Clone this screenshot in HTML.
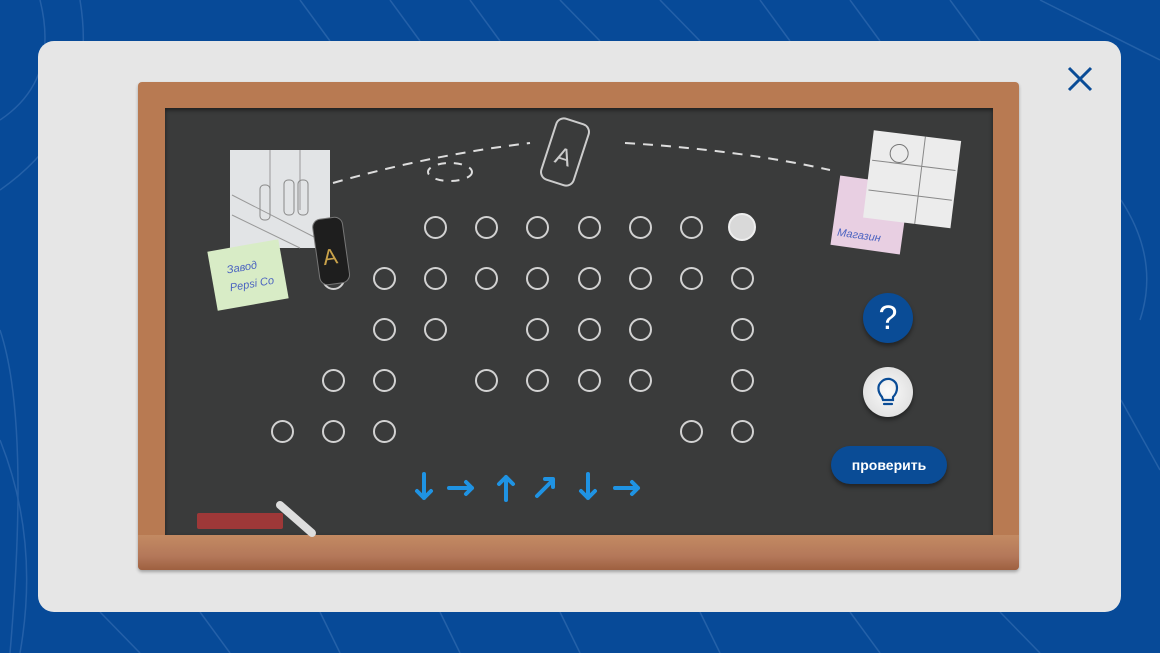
<!DOCTYPE html>
<html><head><meta charset="utf-8"><style>
*{margin:0;padding:0;box-sizing:border-box}
body{width:1160px;height:653px;overflow:hidden;background:#074a98;font-family:"Liberation Sans",sans-serif;position:relative}
.panel{position:absolute;left:38px;top:41px;width:1083px;height:571px;background:#e6e6e6;border-radius:16px}
.frame{position:absolute;left:138px;top:82px;width:881px;height:488px;background:#b87a52;border-radius:4px;box-shadow:0 2px 3px rgba(0,0,0,.3)}
.board{position:absolute;left:165px;top:108px;width:828px;height:427px;background:#3a3b3b;box-shadow:inset 0 2px 4px rgba(0,0,0,.5)}
.ledge{position:absolute;left:138px;top:535px;width:881px;height:35px;background:linear-gradient(#c38a62,#b4785a 60%,#9e6040);border-radius:0 0 4px 4px}
.c{position:absolute;width:23px;height:23px;border:2px solid #d2d2d2;border-radius:50%}
.btn{position:absolute;border-radius:50%;width:50px;height:50px;box-shadow:0 3px 4px rgba(0,0,0,.4)}
#top{position:absolute;left:0;top:0;z-index:2}
</style></head><body>
<svg width="1160" height="653" style="position:absolute;left:0;top:0">
<g stroke="#2c66ad" stroke-width="1.5" fill="none" opacity=".8">
<path d="M0 120 Q60 80 40 0"/><path d="M0 190 Q100 120 80 0"/><path d="M0 330 Q30 420 10 653"/><path d="M0 440 Q40 540 20 653"/>
<path d="M300 0 L330 41"/><path d="M390 0 L420 41"/><path d="M470 0 L500 41"/><path d="M560 0 L600 41"/><path d="M660 0 L700 41"/><path d="M760 0 L790 41"/><path d="M850 0 L880 41"/><path d="M950 0 L980 41"/><path d="M1040 0 L1160 60"/>
<path d="M1121 200 Q1160 260 1140 320"/><path d="M1121 400 L1160 470"/>
<path d="M100 612 L140 653"/><path d="M200 612 L230 653"/><path d="M320 612 L340 653"/><path d="M440 612 L460 653"/><path d="M560 612 L580 653"/><path d="M700 612 L720 653"/><path d="M850 612 L880 653"/><path d="M1000 612 L1040 653"/>
</g></svg>
<div class="panel"></div>
<svg style="position:absolute;left:1066px;top:65px" width="28" height="28"><path d="M3 3L25 25M25 3L3 25" stroke="#0a4c96" stroke-width="3"/></svg>
<div class="frame"></div>
<div class="board"></div>
<div class="ledge"></div>
<div id="g"></div>
<svg id="top" width="1160" height="653">
<path d="M333 183 Q430 155 530 143" stroke="#ddd" stroke-width="2" fill="none" stroke-dasharray="10 8"/>
<ellipse cx="450" cy="172" rx="22" ry="9" stroke="#ddd" stroke-width="2" fill="none" stroke-dasharray="8 8"/>
<path d="M625 143 Q740 150 830 170" stroke="#ddd" stroke-width="2" fill="none" stroke-dasharray="10 8"/>
<g transform="rotate(18 565 152)"><rect x="548" y="120" width="34" height="64" rx="8" fill="none" stroke="#ccc" stroke-width="2"/><text x="557" y="165" fill="#ccc" font-size="24">A</text></g>
<rect x="230" y="150" width="100" height="98" fill="#e2e4e6"/>
<path d="M232 215 L300 248 M232 195 L320 240 M270 150v40 M300 150v60" stroke="#999"/>
<rect x="260" y="185" width="10" height="35" rx="4" fill="none" stroke="#888"/><rect x="284" y="180" width="10" height="35" rx="4" fill="none" stroke="#888"/><rect x="298" y="180" width="10" height="35" rx="4" fill="none" stroke="#888"/>
<g transform="rotate(-10 248 275)"><rect x="212" y="245" width="72" height="60" fill="#d8ecc6"/><text x="228" y="270" fill="#4a62c0" font-size="11" font-style="italic">Завод</text><text x="228" y="288" fill="#4a62c0" font-size="11" font-style="italic">Pepsi Co</text></g>
<g transform="rotate(-8 331 250)"><rect x="316" y="218" width="30" height="66" rx="8" fill="#1e1e1e" stroke="#777"/><text x="322" y="264" fill="#c9a24a" font-size="22">A</text></g>
<g transform="rotate(8 870 215)"><rect x="835" y="180" width="70" height="70" fill="#e8cfe2"/><text x="840" y="240" fill="#4a62c0" font-size="11" font-style="italic">Магазин</text></g>
<g transform="rotate(7 910 180)"><rect x="868" y="135" width="88" height="88" fill="#ececec"/><path d="M870 195h84M870 165h84M920 135v88" stroke="#888"/><circle cx="896" cy="155" r="9" fill="none" stroke="#777"/></g>
<rect x="197" y="513" width="86" height="16" rx="2" fill="#9e3838"/>
<path d="M280 505 L312 533" stroke="#ddd" stroke-width="8" stroke-linecap="round"/>
<g stroke="#1f93e3" stroke-width="4" fill="none" stroke-linecap="round" stroke-linejoin="round">
<path d="M424 474v24M417 491l7 7 7-7"/>
<path d="M449 488h23M466 482l6 6-6 6"/>
<path d="M506 500v-23M499 484l7-7 7 7"/>
<path d="M537 496l16-16M545 479h8v8"/>
<path d="M588 474v24M581 491l7 7 7-7"/>
<path d="M615 488h23M632 482l6 6-6 6"/>
</g>
</svg>
<script>
var rows={227:[435,486,537,589,640,691],278:[333,384,435,486,537,589,640,691,742],329:[384,435,537,589,640,742],380:[333,384,486,537,589,640,742],431:[282,333,384,691,742]};
var h='';for(var y in rows)rows[y].forEach(function(x){h+='<div class="c" style="left:'+(x-11.5)+'px;top:'+(y-11.5)+'px"></div>'});
h+='<div class="c" style="left:728px;top:213px;width:28px;height:28px;background:#d9d9d9;border-color:#eee"></div>';
document.getElementById('g').innerHTML=h;
</script>
<div class="btn" style="left:863px;top:293px;background:#0a4c96;color:#fff;font-size:34px;text-align:center;line-height:50px">?</div>
<div class="btn" style="left:863px;top:367px;background:radial-gradient(#fafafa,#d8d8d8)"><svg width="50" height="50"><path d="M19 30 Q14 24 16 18 Q20 11 27 12 Q34 14 34 21 Q34 26 30 30 L30 33 H20 Z M21 37h8" stroke="#0a4c96" stroke-width="2.2" fill="none" stroke-linecap="round"/></svg></div>
<div style="position:absolute;left:831px;top:446px;width:116px;height:38px;border-radius:19px;background:#0a4c96;color:#fff;font-weight:bold;font-size:14px;text-align:center;line-height:38px;box-shadow:0 3px 4px rgba(0,0,0,.4)">проверить</div>
</body></html>
